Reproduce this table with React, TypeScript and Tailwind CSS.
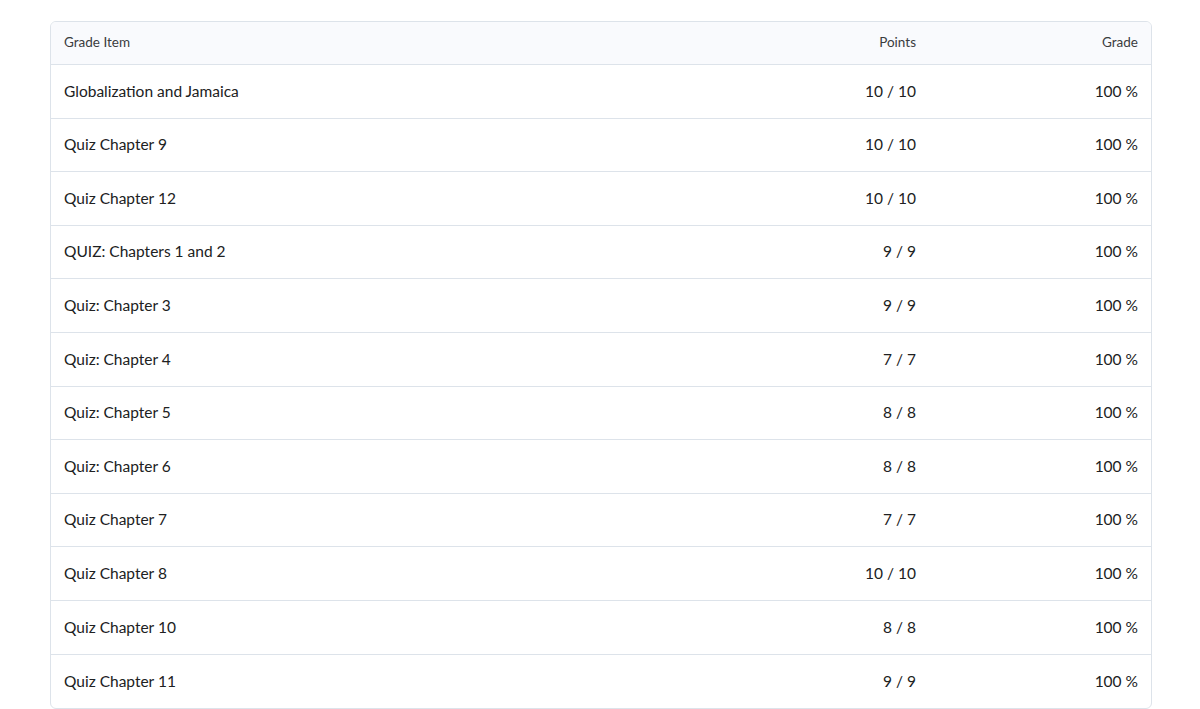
import React from "react";

const rows: [string, string][] = [
  ["Globalization and Jamaica", "10 / 10"],
  ["Quiz Chapter 9", "10 / 10"],
  ["Quiz Chapter 12", "10 / 10"],
  ["QUIZ: Chapters 1 and 2", "9 / 9"],
  ["Quiz: Chapter 3", "9 / 9"],
  ["Quiz: Chapter 4", "7 / 7"],
  ["Quiz: Chapter 5", "8 / 8"],
  ["Quiz: Chapter 6", "8 / 8"],
  ["Quiz Chapter 7", "7 / 7"],
  ["Quiz Chapter 8", "10 / 10"],
  ["Quiz Chapter 10", "8 / 8"],
  ["Quiz Chapter 11", "9 / 9"],
];

export default function App() {
  return (
    <div
      className="w-[1200px] h-[709px] bg-white pt-[21px] pl-[50px] pr-[48px] overflow-hidden"
      style={{ fontFamily: "Lato, 'Open Sans', sans-serif" }}
    >
      <div className="border border-[#dde3ea] rounded-[6px] overflow-hidden">
        <div className="flex items-center h-[43px] bg-[#f9fafd] border-b border-[#dde3ea] text-[13.5px] text-[#3a3c3e]">
          <div className="flex-1 pl-[13px] pb-[1px]">Grade Item</div>
          <div className="w-[300px] text-right pr-[14px] pb-[1px]">Points</div>
          <div className="w-[221px] text-right pr-[13px] pb-[1px]">Grade</div>
        </div>
        {rows.map(([name, pts], i) => (
          <div
            key={i}
            className={`flex items-center h-[53.6px] text-[15.5px] text-[#202122] ${
              i < rows.length - 1 ? "border-b border-[#dde3ea]" : ""
            }`}
          >
            <div className="flex-1 pl-[13px]">{name}</div>
            <div className="w-[300px] text-right pr-[14px]">{pts}</div>
            <div className="w-[221px] text-right pr-[13px]">100 %</div>
          </div>
        ))}
      </div>
    </div>
  );
}
